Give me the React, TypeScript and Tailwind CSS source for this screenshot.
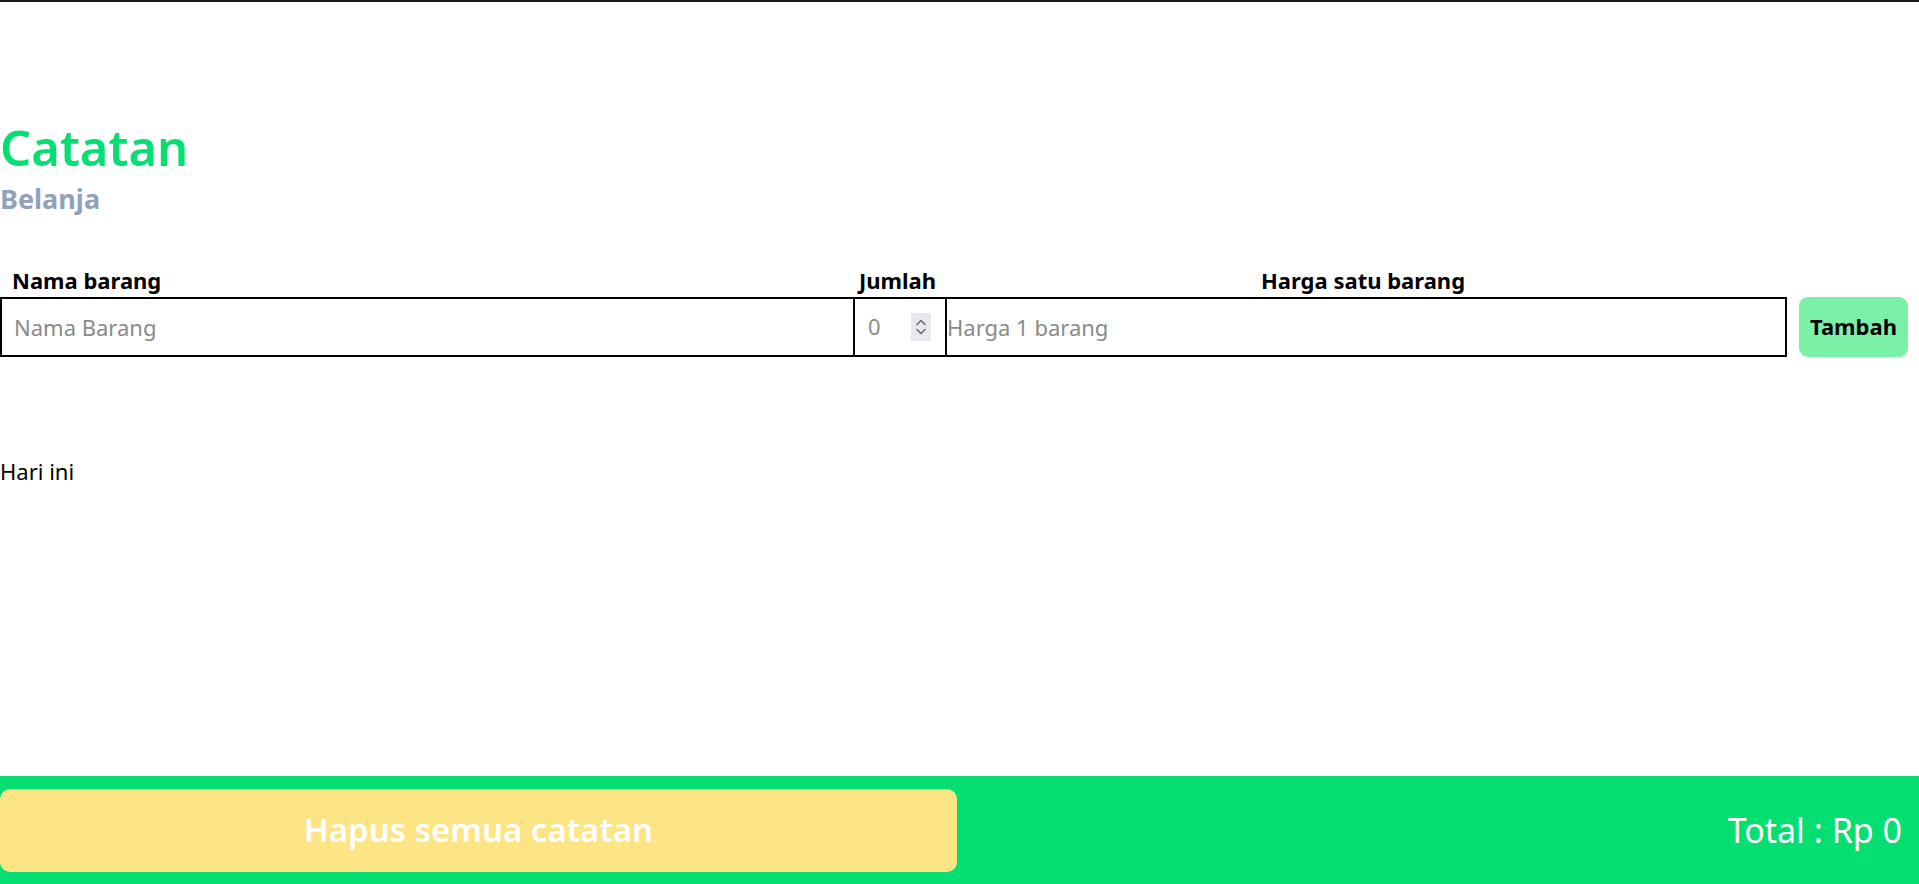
import { useState } from "react";

export default function App() {
  const [nama, setNama] = useState("");
  const [harga, setHarga] = useState("");
  const total = 0;

  return (
    <div className="min-h-screen flex flex-col bg-white text-black font-['Noto_Sans','Open_Sans',sans-serif]">
      <div className="h-[2px] bg-[#1b1b1b]" />

      <main className="flex-1">
        {/* judul */}
        <header className="pt-[121px]">
          <h1 className="text-[49px] font-semibold leading-none text-green-400">Catatan</h1>
          <h2 className="mt-[10px] text-[27px] font-bold leading-tight text-slate-400">Belanja</h2>
        </header>

        {/* form tambah barang */}
        <form className="mt-[53px]" onSubmit={(e) => e.preventDefault()}>
          <div className="flex text-[22px] font-bold leading-none">
            <label className="w-[855px] pl-[12px]">Nama barang</label>
            <label className="w-[406px] pl-[4px]">Jumlah</label>
            <label>Harga satu barang</label>
          </div>
          <div className="mt-[6px] flex items-center">
            <input
              value={nama}
              onChange={(e) => setNama(e.target.value)}
              placeholder="Nama Barang"
              className="h-[60px] w-[855px] border-2 border-black px-[12px] text-[22px] placeholder:text-[#8a8a8a] outline-none"
            />
            <div className="flex h-[60px] w-[90px] items-center border-y-2 border-black pl-[13px] text-[22px] text-[#8a8a8a]">
              <span className="flex-1">0</span>
              <span className="mr-[14px] flex h-[28px] w-[20px] items-center justify-center bg-[#e9e9ed]">
                <svg width="14" height="24" viewBox="0 0 14 24" fill="none" stroke="#6b6b75" strokeWidth="1.6" strokeLinecap="round" strokeLinejoin="round">
                  <path d="M3 9.5 7 5.5 11 9.5" />
                  <path d="M3 14.5 7 18.5 11 14.5" />
                </svg>
              </span>
            </div>
            <input
              value={harga}
              onChange={(e) => setHarga(e.target.value)}
              placeholder="Harga 1 barang"
              className="h-[60px] w-[842px] border-2 border-black px-0 text-[22px] placeholder:text-[#8a8a8a] outline-none"
            />
            <button
              type="submit"
              className="ml-[12px] h-[60px] rounded-[9px] bg-green-300 px-[11px] text-[22px] font-bold"
            >
              Tambah
            </button>
          </div>
        </form>

        <p className="mt-[98px] text-[22px]">Hari ini</p>
      </main>

      <footer className="flex h-[108px] items-center justify-between bg-green-400 pr-[17px]">
        <button className="h-[83px] w-[957px] rounded-[10px] bg-[#fde585] text-[33px] font-semibold text-white">
          Hapus semua catatan
        </button>
        <span className="text-[34px] text-white">Total : Rp {total}</span>
      </footer>
    </div>
  );
}
